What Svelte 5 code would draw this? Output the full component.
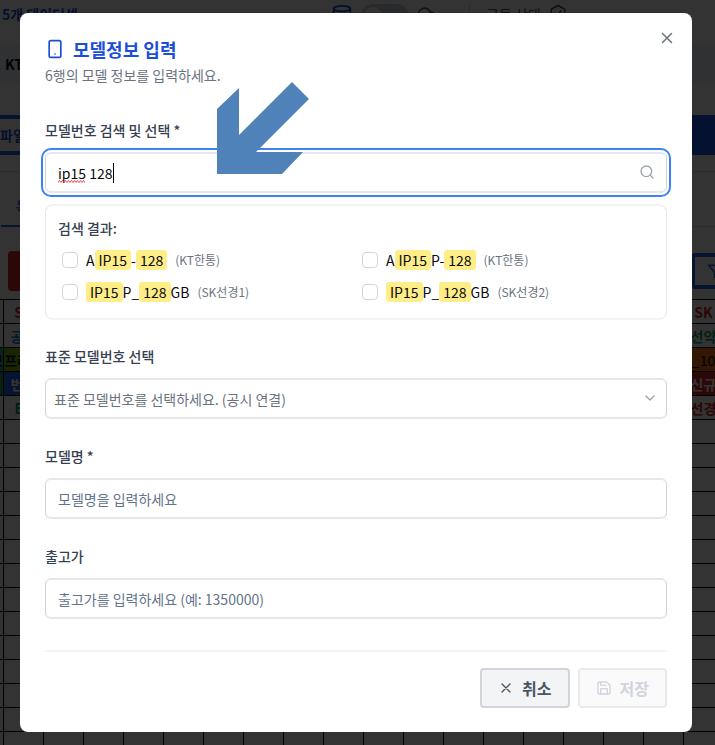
<script>
  let query = $state('ip15 128');
  let standard = $state('');
  let modelName = $state('');
  let price = $state('');

  const results = [
    { parts: [['A', 0], ['IP15', 1], ['-', 0], ['128', 1]], shop: '(KT한통)' },
    { parts: [['A', 0], ['IP15', 1], ['P-', 0], ['128', 1]], shop: '(KT한통)' },
    { parts: [['IP15', 1], ['P_', 0], ['128', 1], ['GB', 0]], shop: '(SK선경1)' },
    { parts: [['IP15', 1], ['P_', 0], ['128', 1], ['GB', 0]], shop: '(SK선경2)' }
  ];

  // sheet behind the dialog: first, second and last columns carry values
  const filled = [
    [['', ''], ['SK', 'red'], ['SK', 'red']],
    [['', ''], ['공시', 'sky'], ['선약', 'green']],
    [['메모', 'on-teal'], ['프리미', 'on-lime'], ['_10', 'on-orange']],
    [['', 'on-green'], ['번호', 'on-blue'], ['신규', 'on-red']],
    [['', ''], ['EK', 'green'], ['선경', 'red']]
  ];
  const blank = [['', ''], ['', ''], ['', '']];
  const rows = Array.from({ length: 20 }, (_, i) => filled[i] ?? blank);
  const middle = Array.from({ length: 16 });
</script>

<div class="screen">
  <div class="page" inert>
    <header class="top">
      <strong>5개 데이터셋</strong>
      <div class="tools">
        <svg width="22" height="22" viewBox="0 0 24 24" class="blue"><ellipse cx="12" cy="5" rx="9" ry="3" /><path d="M3 5v14c0 1.700 4 3 9 3s9-1.300 9-3V5M3 12c0 1.700 4 3 9 3s9-1.300 9-3" /></svg>
        <span class="toggle"></span>
        <svg width="20" height="20" viewBox="0 0 24 24"><path d="M17.500 19H9a7 7 0 1 1 6.700-9h1.800a4.500 4.500 0 1 1 0 9Z" /></svg>
      </div>
      <div class="state">
        <span>구동 상태</span>
        <svg width="18" height="18" viewBox="0 0 24 24"><path d="M12 2l9 5v10l-9 5-9-5V7z" /><path d="M8 12l3 3 5-6" /></svg>
      </div>
    </header>
    <div class="carrier">KT</div>
    <div class="actions"><button class="file">파일</button><button class="apply" aria-label="적용"></button></div>
    <div class="tabs"><a href="#sheet">목록</a></div>
    <div class="bar">
      <button class="delete" aria-label="삭제"></button>
      <button class="filter" aria-label="필터"><svg width="18" height="18" viewBox="0 0 24 24"><path d="M22 3H2l8 9.500V19l4 2v-8.500z" /></svg></button>
    </div>
    <table id="sheet">
      <tbody>
        {#each rows as row}
          <tr>
            <td class={row[0][1]}>{row[0][0]}</td>
            <td class={row[1][1]}>{row[1][0]}</td>
            {#each middle as _}<td></td>{/each}
            <td class={row[2][1]}>{row[2][0]}</td>
          </tr>
        {/each}
      </tbody>
    </table>
  </div>

  <div class="scrim">
    <div class="dialog" role="dialog" aria-modal="true" aria-labelledby="title" aria-describedby="desc">
      <button class="close" type="button" aria-label="닫기">
        <svg width="18" height="18" viewBox="0 0 24 24"><path d="M18 6 6 18M6 6l12 12" /></svg>
      </button>

      <div class="heading">
        <svg width="20" height="20" viewBox="0 0 24 24"><rect x="5" y="2" width="14" height="20" rx="2" /><path d="M12 18h.01" /></svg>
        <h2 id="title">모델정보 입력</h2>
      </div>
      <p id="desc">6행의 모델 정보를 입력하세요.</p>

      <form>
        <div class="field">
          <label for="query">모델번호 검색 및 선택 *</label>
          <div class="control">
            <input id="query" class="focused" type="text" bind:value={query} />
            <span class="typed" aria-hidden="true">
              <svg class="squiggle" width="27" height="3" viewBox="0 0 27 3"><path d="M0 2.500l1.500-2 1.500 2 1.500-2 1.500 2 1.500-2 1.500 2 1.500-2 1.500 2 1.500-2 1.500 2 1.500-2 1.500 2 1.500-2 1.500 2 1.500-2 1.500 2 1.500-2 1.500 2" /></svg>
              <span class="caret"></span>
            </span>
            <svg class="icon" width="16" height="16" viewBox="0 0 24 24"><circle cx="11" cy="11" r="8" /><path d="m21 21-4.300-4.300" /></svg>
            <svg class="arrow" width="92" height="92" viewBox="0 0 92 92"><path d="M75 0 92 17 39 70H86L65 92H0V27L22 6V53Z" /></svg>
          </div>
          <fieldset>
            <legend>검색 결과:</legend>
            <div class="results">
              {#each results as item}
                <label class="result">
                  <input type="checkbox" />
                  <span>{#each item.parts as [text, hit]}{#if hit}<mark>{text}</mark>{:else}{text}{/if}{/each}</span>
                  <small>{item.shop}</small>
                </label>
              {/each}
            </div>
          </fieldset>
        </div>

        <div class="field">
          <label for="standard">표준 모델번호 선택</label>
          <div class="control">
            <select id="standard" bind:value={standard}>
              <option value="">표준 모델번호를 선택하세요. (공시 연결)</option>
            </select>
            <svg class="icon chevron" width="16" height="16" viewBox="0 0 24 24"><path d="m6 9 6 6 6-6" /></svg>
          </div>
        </div>

        <div class="field">
          <label for="name">모델명 *</label>
          <input id="name" type="text" placeholder="모델명을 입력하세요" bind:value={modelName} />
        </div>

        <div class="field">
          <label for="price">출고가</label>
          <input id="price" type="text" placeholder="출고가를 입력하세요 (예: 1350000)" bind:value={price} />
        </div>

        <footer>
          <button class="btn" type="button">
            <svg width="16" height="16" viewBox="0 0 24 24"><path d="M18 6 6 18M6 6l12 12" /></svg>취소
          </button>
          <button class="btn" type="submit" disabled>
            <svg width="16" height="16" viewBox="0 0 24 24"><path d="M15.200 3a2 2 0 0 1 1.400.6l3.800 3.800a2 2 0 0 1 .6 1.400V19a2 2 0 0 1-2 2H5a2 2 0 0 1-2-2V5a2 2 0 0 1 2-2z" /><path d="M17 21v-7a1 1 0 0 0-1-1H8a1 1 0 0 0-1 1v7M7 3v4a1 1 0 0 0 1 1h7" /></svg>저장
          </button>
        </footer>
      </form>
    </div>
  </div>
</div>

<style>
  .screen {
    position: relative;
    min-height: 100vh;
    overflow: hidden;
    font-family: 'Noto Sans CJK KR', 'Noto Sans', sans-serif;
    font-size: 14px;
    line-height: 20px;
    color: #0a0a0a;
  }
  .screen * { box-sizing: border-box; }
  svg { fill: none; stroke: currentColor; stroke-width: 2; stroke-linecap: round; stroke-linejoin: round; flex: none; }
  button, input, select { font: inherit; color: inherit; }

  .page { position: absolute; inset: 0; overflow: hidden; background: #fff; }
  .top { display: flex; height: 44px; padding: 4px 2px; }
  .top strong { flex: 1; color: #1d4ed8; }
  .top .tools { display: flex; gap: 8px; margin-right: 32px; color: #4b5563; }
  .top .blue { color: #1d4ed8; }
  .toggle { width: 48px; height: 24px; border-radius: 12px; background: #cbd0d8; }
  .toggle::after { content: ''; display: block; width: 18px; height: 18px; margin: 3px; border-radius: 50%; background: #fff; }
  .state { display: flex; gap: 8px; width: 244px; padding-left: 16px; border-left: 1px solid #d1d5db; color: #4b5563; }
  .carrier { height: 40px; padding: 10px 5px; background: #eef2f7; font-size: 14px; font-weight: 700; }
  .actions { display: flex; justify-content: space-between; height: 88px; padding: 31px 0 16px; border-bottom: 1px solid #d1d5db; }
  .actions button { height: 40px; }
  .file { width: 96px; margin-left: -20px; padding: 0 16px; border: 4px solid #2563eb; background: #fff; color: #1d4ed8; font-weight: 700; text-align: left; }
  .apply { width: 96px; border: 0; background: #1d56f5; }
  .tabs { height: 55px; padding: 24px 0 0 1px; border-bottom: 1px solid #d1d5db; }
  .tabs a { display: block; width: 80px; height: 31px; padding-left: 15px; border-bottom: 2px solid #2563eb; color: #2563eb; font-weight: 700; text-decoration: none; }
  .bar { display: flex; justify-content: space-between; align-items: center; height: 72px; padding: 16px 0 0 8px; }
  .delete { width: 80px; height: 40px; border: 0; border-radius: 4px; background: #dc2626; }
  .filter { width: 80px; height: 36px; margin-right: -56px; padding: 6px 12px; border: 4px solid #2563eb; border-radius: 4px; background: #fff; color: #2563eb; text-align: left; }
  table { width: 761px; margin-left: -37px; border-collapse: collapse; table-layout: fixed; }
  td { width: 40px; height: 24px; padding: 0; border: 1px solid #000; font-weight: 700; text-align: center; white-space: nowrap; }
  .red { color: #dc2626; }
  .sky { color: #0284c7; }
  .green { color: #16a34a; }
  .on-teal { background: #14b8a6; text-align: right; }
  .on-lime { background: #84b816; }
  .on-orange { background: #f97316; font-weight: 400; }
  .on-green { background: #16a34a; }
  .on-blue { background: #2563eb; color: #fff; }
  .on-red { background: #dc2626; color: #fff; }

  .scrim {
    position: relative;
    display: flex;
    align-items: center;
    min-height: 100vh;
    padding: 12px 23px 12px 20px;
    background: rgba(0, 0, 0, 0.8);
  }
  .dialog { position: relative; flex: 1; min-width: 0; padding: 24px 25px; border-radius: 8px; background: #fff; }
  .close { position: absolute; top: 16px; right: 16px; display: flex; padding: 0; border: 0; background: none; color: #6b7280; }
  .heading { display: flex; align-items: center; gap: 8px; color: #1d4ed8; }
  h2 { margin: 0; font-size: 18px; line-height: 24px; font-weight: 700; }
  p { margin: 4px 0 35px; color: #6b7280; }
  form { display: flex; flex-direction: column; gap: 28px; }
  .field { display: flex; flex-direction: column; gap: 12px; }
  .field > label, legend { color: #374151; font-weight: 500; }
  .control { position: relative; display: flex; }
  input[type='text'], select {
    width: 100%;
    height: 41px;
    padding: 0 12px;
    border: solid;
    border-width: 2px 1px;
    border-color: #e5e7eb #d1d5db;
    border-radius: 6px;
    background: #fff;
  }
  #name, #price, #standard { margin-bottom: -1px; }
  input::placeholder { color: #64748b; opacity: 1; }
  .focused { outline: 2px solid #3b82f6; outline-offset: 2px; }
  select { appearance: none; padding-left: 8px; color: #6b7280; }
  .icon { position: absolute; top: 12px; right: 12px; color: #9ca3af; pointer-events: none; }
  .chevron { right: 9px; }
  .typed { position: absolute; top: 11px; left: 13px; width: 56px; height: 20px; pointer-events: none; }
  .squiggle { position: absolute; left: 0; bottom: 0; stroke: #ef4444; stroke-width: 1; }
  .caret { position: absolute; right: 0; width: 1px; height: 20px; background: #000; }
  .arrow { position: absolute; left: 172px; bottom: 19px; fill: #4e82b8; stroke: none; pointer-events: none; }

  fieldset { min-width: 0; margin: -1px 0 -2px; padding: 12px; border: solid #f3f4f6; border-width: 2px 1px; border-color: #f3f4f6 #e5e7eb; border-radius: 8px; }
  legend { float: left; width: 100%; padding: 0; margin-bottom: 8px; }
  .results { clear: both; display: grid; grid-template-columns: 1fr 1fr; gap: 4px; }
  .result { display: flex; align-items: center; gap: 8px; height: 28px; padding-left: 4px; }
  .result input { appearance: none; width: 16px; height: 16px; margin: 0; border: 1px solid #d1d5db; border-radius: 4px; background: #fff; }
  mark { padding: 0 4px; border-radius: 3px; background: #ffee88; color: inherit; }
  small { font-size: 12px; color: #6b7280; }

  footer { display: flex; justify-content: flex-end; gap: 8px; margin-top: 4px; padding-top: 16px; border-top: 2px solid #f3f4f6; }
  .btn { display: flex; align-items: center; gap: 8px; height: 40px; padding: 0 16px; border: 2px solid #d1d5db; border-radius: 4px; background: #f3f4f6; color: #4b5563; font-size: 16px; font-weight: 700; }
  .btn:disabled { border-color: #e8e9ed; background: #fafafa; color: #d1d5db; }
</style>
